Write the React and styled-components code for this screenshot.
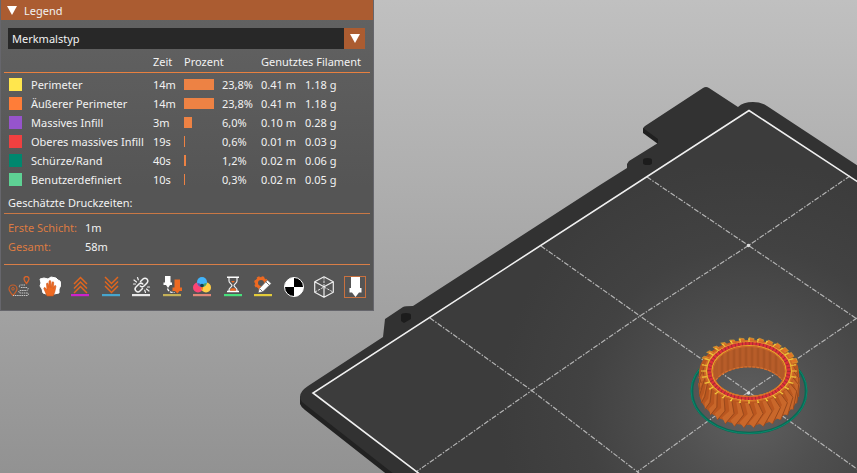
import { useState } from 'react';
import styled, { createGlobalStyle } from 'styled-components';

const features = [
  { name: 'Perimeter', color: '#ffe64d', time: '14m', share: 30, percent: '23,8%', length: '0.41 m', weight: '1.18 g' },
  { name: 'Äußerer Perimeter', color: '#ff7d38', time: '14m', share: 30, percent: '23,8%', length: '0.41 m', weight: '1.18 g' },
  { name: 'Massives Infill', color: '#9654cc', time: '3m', share: 8, percent: '6,0%', length: '0.10 m', weight: '0.28 g' },
  { name: 'Oberes massives Infill', color: '#f04040', time: '19s', share: 1, percent: '0,6%', length: '0.01 m', weight: '0.03 g' },
  { name: 'Schürze/Rand', color: '#00876e', time: '40s', share: 2, percent: '1,2%', length: '0.02 m', weight: '0.06 g' },
  { name: 'Benutzerdefiniert', color: '#5ed194', time: '10s', share: 1, percent: '0,3%', length: '0.02 m', weight: '0.05 g' },
];

const Chevrons = ({ down }) => (
  <g fill="none" stroke="#e0661f" strokeWidth="1.5" transform={down ? 'matrix(1 0 0 -1 0 18)' : undefined}>
    <path d="M5 8l6.500-6.500L18 8M5 12.500L11.500 6 18 12.500M5 17l6.500-6.500L18 17" />
  </g>
);

const tools = [
  {
    label: 'Eilgang',
    art: (
      <>
        <path d="M5 19.500c-3-3.500-4-5-4-6.500a4 4 0 0 1 8 0c0 1.500-1 3-4 6.500z" fill="none" stroke="#c9602a" strokeWidth="1.200" />
        <circle cx="5" cy="12.800" r="1.300" fill="none" stroke="#c9602a" />
        <path d="M18.500 7.500c-2-2.500-2.500-3.500-2.500-4.500a2.500 2.500 0 0 1 5 0c0 1-.5 2-2.500 4.500z" fill="none" stroke="#d9642a" strokeWidth="1.300" />
        <path d="M17 9h-4c-3 0-2 2.500 0 2.500h5c3 0 3 3 0 3h-5c-3 0-3 2.500 0 2.500h6c2 0 2 2.500 0 2.500H5" fill="none" stroke="#c8c8c8" strokeWidth="1" strokeDasharray="1.500 .7" />
      </>
    ),
  },
  {
    label: 'Wischen',
    art: (
      <>
        <path d="M1 3l4-1 4 1 3-2 5 1 2 2 2 1 1 4-2 4 0 4-5 1-4-1-4 1-3-1-1-4-2-3 1-3z" fill="#fff" stroke="#fff" strokeLinejoin="round" />
        <path d="M8 20l-3-7c-.6-1.200.6-2 1.500-1L8 14 7.500 8c0-1.200 1.500-1.300 1.700 0L9.800 11.500 10 5.500c0-1.300 1.800-1.300 1.800 0l.2 6 1-5c.3-1.200 1.900-.9 1.700.4L14.300 12.500l1-2.500c.5-1 1.800-.6 1.600.5l-1 5c-.5 2.500-1.500 2.500-1.600 4.500z" fill="#ee6a22" stroke="#cf5519" strokeWidth=".6" />
      </>
    ),
  },
  { label: 'Einziehen', bar: '#cc22cc', art: <Chevrons /> },
  { label: 'Wiedereinzug', bar: '#46a5cd', art: <Chevrons down /> },
  {
    label: 'Nähte',
    bar: '#e8e8e8',
    art: (
      <g fill="none" stroke="#f2f2f2" strokeWidth="1.500" strokeLinecap="round">
        <path d="M10.500 5.500l2.500-2.500a2.800 2.800 0 0 1 4 4l-3 3c-1.200 1.200-2.700 1-3.800 0" />
        <path d="M12.500 12.500L10 15a2.800 2.800 0 0 1-4-4l3-3c1.200-1.200 2.700-1 3.800 0" />
        <path d="M4 4l2.500 2M7.500 1.500l.8 2.300M3.500 8h2M19 15l-2.500-2M15.500 16.500l-.8-2.300M19.500 11h-2" strokeWidth="1.200" />
      </g>
    ),
  },
  {
    label: 'Werkzeugwechsel',
    bar: '#c4b158',
    art: (
      <>
        <path d="M4 0h5.500v6.500H11V9H9l-2 3-2-3H2.500V6.500H4z" fill="#fff" />
        <path d="M13.500 3.500H19v8h2V15h-2.500L16.500 17.500 14 15h-2.500v-3.500h2z" fill="#ee6a22" />
        <path d="M6.500 12.500c1 3 3 4 7 4" fill="none" stroke="#fff" strokeWidth="1.200" strokeDasharray="3 1" />
      </>
    ),
  },
  {
    label: 'Farbwechsel',
    bar: '#df8878',
    art: (
      <>
        <circle cx="7" cy="11.500" r="5" fill="#fc4474" />
        <circle cx="15" cy="11.500" r="5" fill="#ffcf47" />
        <circle cx="11" cy="6" r="5" fill="#42b4fa" />
        <path d="M11 8.500a5 5 0 0 1 0 6 5 5 0 0 1 0-6z" fill="#f47a26" />
        <path d="M6.200 7a5 5 0 0 1 4.800 4 5 5 0 0 1-4.800-4z" fill="#6755a4" />
        <path d="M15.800 7a5 5 0 0 1-4.800 4 5 5 0 0 1 4.800-4z" fill="#42a96b" />
        <circle cx="11" cy="9.500" r="1.800" fill="#173d50" />
      </>
    ),
  },
  {
    label: 'Druckpause',
    bar: '#48df7c',
    art: (
      <>
        <path d="M7 2v3c0 2 3 3 3 4.500S7 12 7 14v1h8v-1c0-2-3-3-3-4.500S15 7 15 5V2" fill="none" stroke="#eee" strokeWidth="1.200" />
        <path d="M5 1.200h12M5 15.500h12" stroke="#fff" strokeWidth="1.500" />
        <path d="M9 5h4L11 7zM8 14.800c0-2 1-2.500 3-2.500s3 .5 3 2.500z" fill="#ee6a22" />
      </>
    ),
  },
  {
    label: 'Benutzerdefinierter G-Code',
    bar: '#e3cc3a',
    art: (
      <>
        <circle cx="9" cy="7" r="4.500" fill="none" stroke="#ee6a22" strokeWidth="3" />
        <circle cx="9" cy="7" r="6" fill="none" stroke="#ee6a22" strokeWidth="1.800" strokeDasharray="2.600 2.100" />
        <path d="M6 17l1.300-4.500L15.500 4l3.800 3.500-8.500 8.300z" fill="#fff" stroke="#575757" strokeWidth=".7" />
        <path d="M13.500 5.500l4 4M8 13l2.500 2.500" stroke="#575757" strokeWidth=".8" />
      </>
    ),
  },
  {
    label: 'Schwerpunkt',
    art: (
      <>
        <circle cx="11" cy="11" r="9.500" fill="#000" stroke="#fff" />
        <path d="M11 11V1.500A9.500 9.500 0 0 0 1.500 11zM11 11v9.500a9.500 9.500 0 0 0 9.500-9.500z" fill="#fff" />
      </>
    ),
  },
  {
    label: 'Hülle',
    art: (
      <g fill="none" stroke="#eee" strokeWidth="1.200" strokeLinejoin="round">
        <path d="M11 .8l9.300 5v10.500L11 21.300l-9.300-5V5.800zM1.700 5.800l9.300 5 9.300-5M11 10.800v10.500" />
        <path d="M11 1v9M2 16l9-5 9 5" strokeWidth=".9" strokeDasharray="2.500 1" />
      </g>
    ),
  },
  {
    label: 'Werkzeugmarker',
    active: true,
    art: <path d="M7 0h9v12h1.500v4.500H15L11.500 21 8 16.500H5.500V12H7z" fill="#fff" />,
  },
];

const at = (cx, cy, rx, ry, a) => `${(cx + rx * Math.cos(a)).toFixed(1)} ${(cy + ry * Math.sin(a)).toFixed(1)}`;
const TEETH = 32;
const toothAngles = Array.from({ length: TEETH }, (_, i) => (i / TEETH) * Math.PI * 2 + Math.PI / 2);

function Tyre() {
  return (
    <g>
      <ellipse cx="749" cy="391" rx="57" ry="42" fill="none" stroke="#086a55" strokeWidth="2.600" />
      <ellipse cx="749" cy="391" rx="58" ry="42.500" fill="none" stroke="#0a8a6c" strokeWidth="1" />
      <path
        fillRule="evenodd"
        fill="#b9561f"
        d="M699 373a50 33 0 0 1 100 0l0 18a50 34 0 0 1-100 0zM713 371a36 26 0 0 0 72 0a36 26 0 0 0-72 0z"
      />
      {/* inner wall, open towards the floor */}
      <path fill="#b35a28" d="M713 371a36 26 0 0 1 72 0q0 5-3 9.500a36 22 0 0 0-66 0q-3-4.500-3-9.500z" />
      {Array.from({ length: 21 }, (_, i) => {
        const x = 719 + i * 3;
        const dy = Math.sqrt(1 - ((x - 749) / 36) ** 2);
        return (
          <path key={x} d={`M${x} ${371 - 25 * dy}V${386 - 19 * dy}`} stroke={i % 2 ? '#a04e20' : '#bf622c'} strokeWidth=".8" />
        );
      })}
      <path d="M716 380a36 22 0 0 1 66 0" fill="none" stroke="#d4702e" strokeWidth="1.300" strokeDasharray="3 1" />
      {toothAngles.map((a) => {
        const front = Math.sin(a) > -0.25;
        return front ? (
          <g key={a}>
            <path
              d={`M${at(749, 372, 45, 31, a)}L${at(749, 381, 51, 34, a - 0.09)}L${at(749, 393, 50, 35, a + 0.1)}L${at(749, 391, 48, 32, a + 0.2)}L${at(749, 381, 48, 33, a + 0.03)}L${at(749, 372, 45, 31, a + 0.09)}z`}
              fill="#c9672a"
            />
            <path
              d={`M${at(749, 372, 45, 31, a)}L${at(749, 381, 50, 34, a - 0.09)}L${at(749, 393, 50, 35, a + 0.1)}`}
              fill="none"
              stroke="#99491c"
              strokeWidth="1"
            />
          </g>
        ) : (
          <path
            key={a}
            d={`M${at(749, 371, 45, 30, a)}L${at(749, 371, 51, 33.5, a)}L${at(749, 372, 51, 33.5, a + 0.1)}L${at(749, 372, 45, 30, a + 0.1)}z`}
            fill="#df7426"
            stroke="#d9a42f"
            strokeWidth=".6"
          />
        );
      })}
      <ellipse cx="749" cy="371" rx="43.500" ry="29.500" fill="none" stroke="#d06a28" strokeWidth="3" />
      <ellipse cx="749" cy="371" rx="42.500" ry="29" fill="none" stroke="#e8b532" strokeWidth="1.200" />
      {toothAngles.map((a) => (
        <path
          key={a}
          d={`M${at(749, 371, 43, 29, a)}L${at(749, 371, 47, 32, a)}m-1 0l2 0`}
          stroke="#edc43b"
          strokeWidth="1.200"
        />
      ))}
      <ellipse cx="749" cy="371" rx="39.500" ry="27" fill="none" stroke="#dc3238" strokeWidth="4" />
      <ellipse cx="749" cy="371" rx="39.500" ry="27" fill="none" stroke="#a52a35" strokeWidth="4" strokeDasharray="1 2.500" />
      <ellipse cx="749" cy="371" rx="37" ry="25.500" fill="none" stroke="#e3a72c" strokeWidth="1.200" />
      <ellipse cx="749" cy="371.500" rx="36" ry="25" fill="none" stroke="#cf6828" strokeWidth="1" />
    </g>
  );
}

function Scene() {
  return (
    <SceneSvg viewBox="0 0 857 473" preserveAspectRatio="xMinYMin slice" aria-hidden="true">
      <defs>
        <radialGradient id="glow" gradientUnits="userSpaceOnUse" cx="748" cy="410" r="250">
          <stop offset="0" stopColor="#606060" />
          <stop offset=".3" stopColor="#505050" />
          <stop offset=".65" stopColor="#424242" />
          <stop offset="1" stopColor="#3c3c3c" />
        </radialGradient>
      </defs>
      <path d="M300 397v7q1 3 5 6l84 66h20L306 392z" fill="#222" />
      <path
        d="M308 386L383 337L385 319L403 307Q405 306 413 306L600 185L627 168V164L629 161L658 143L656 139L645 132Q641 129 645 126L703 88Q706 86 709 88L738 107Q743 102 753 102Q761 102 767 106L861 168V478H399L302 402Q296 394 308 386z"
        fill="#323232"
      />
      <path d="M643 128l15 11v5l-15-11z" fill="#202020" />
      <path d="M749 110L313 393l108 80h436V181z" fill="url(#glow)" />
      <g fill="none" stroke="#b4b4b4" strokeWidth="1.200" strokeDasharray="5 1.500 1.500 1.500">
        <path d="M647 177l101.500 68.500L857 319M541 246l99 70 108.500 76L857 469M430 318l101 72 108 83" />
        <path d="M850 176l-101.500 69.500L640 316 531 391l-115 81M857 318l-108.500 74L637 472" />
      </g>
      <path d="M421 475L313 393l436-282.500L861 184" fill="none" stroke="#f0f0f0" strokeWidth="1.600" />
      <g fill="#1c1c1c">
        <path d="M643 160a4.500 2 0 0 1 9 0v3a4.500 2 0 0 1-9 0z" />
        <path d="M401 315a5 2 0 0 1 10 0v4l-7 4-3-2z" />
      </g>
      <circle cx="748.500" cy="245.500" r="1.700" fill="#ddd" />
      <circle cx="748.500" cy="393" r="1.700" fill="#ddd" />
      <Tyre />
    </SceneSvg>
  );
}

function App() {
  const [open, setOpen] = useState(true);

  return (
    <Viewport>
      <GlobalStyle />
      <Scene />
      <Panel>
        <TitleBar type="button" aria-expanded={open} onClick={() => setOpen(!open)}>
          <Triangle />
          Legend
        </TitleBar>
        {open && (
          <>
            <SelectBox>
              <Select aria-label="Ansicht" defaultValue="feature">
                <option value="feature">Merkmalstyp</option>
              </Select>
              <SelectArrow>
                <Triangle />
              </SelectArrow>
            </SelectBox>
            <Table>
              <thead>
                <tr>
                  <th colSpan={2} />
                  <th>Zeit</th>
                  <th colSpan={2}>Prozent</th>
                  <th colSpan={2}>Genutztes Filament</th>
                </tr>
              </thead>
              <tbody>
                {features.map((f) => (
                  <tr key={f.name}>
                    <SwatchCell>
                      <Swatch $color={f.color} />
                    </SwatchCell>
                    <NameCell>{f.name}</NameCell>
                    <Cell $width={31}>{f.time}</Cell>
                    <Cell $width={38}>
                      <Bar style={{ width: f.share }} />
                    </Cell>
                    <Cell $width={39}>{f.percent}</Cell>
                    <Cell $width={44}>{f.length}</Cell>
                    <Cell $width={65}>{f.weight}</Cell>
                  </tr>
                ))}
              </tbody>
            </Table>
            <Heading>Geschätzte Druckzeiten:</Heading>
            <Times>
              <dt>Erste Schicht:</dt>
              <dd>1m</dd>
              <dt>Gesamt:</dt>
              <dd>58m</dd>
            </Times>
            <Toolbar>
              {tools.map((t) => (
                <ToolButton key={t.label} type="button" aria-label={t.label} aria-pressed={!!t.active} $active={t.active}>
                  <svg viewBox="0 0 22 22" width="22" height="22">
                    {t.art}
                    {t.bar && <rect x="2" y="18" width="18" height="2.200" fill={t.bar} />}
                  </svg>
                </ToolButton>
              ))}
            </Toolbar>
          </>
        )}
      </Panel>
    </Viewport>
  );
}

const GlobalStyle = createGlobalStyle`
  body {
    margin: 0;
    font: 11px/19px "Noto Sans", sans-serif;
    color: #f2f2f2;
  }
`;

const Viewport = styled.main`
  position: relative;
  min-height: 100vh;
  overflow: hidden;
  background: linear-gradient(#c0c0c0, #929292);
`;

const SceneSvg = styled.svg`
  position: absolute;
  inset: 0;
  width: 100%;
  height: 100%;
`;

const Panel = styled.section`
  position: relative;
  box-sizing: border-box;
  width: fit-content;
  border: 1px solid #66666c;
  border-top: 0;
  background: linear-gradient(#636363, #555 60%);
`;

const TitleBar = styled.button`
  display: flex;
  align-items: center;
  gap: 7px;
  width: 100%;
  height: 20px;
  padding: 0 6px;
  border: 0;
  background: #ab5c31;
  color: inherit;
  font: inherit;
`;

const Triangle = styled.span`
  border: 5px solid transparent;
  border-top: 9px solid #fff;
  border-bottom: 0;
`;

const SelectBox = styled.div`
  position: relative;
  margin: 8px 8px 3px 7px;
`;

const Select = styled.select`
  display: block;
  appearance: none;
  width: 100%;
  height: 21px;
  padding: 0 24px 0 4px;
  border: 0;
  border-radius: 0;
  background: #282828;
  color: inherit;
  font: inherit;
`;

const SelectArrow = styled.span`
  position: absolute;
  inset: 0 0 0 auto;
  display: grid;
  place-items: center;
  width: 21px;
  background: #ab5c31;
  pointer-events: none;
`;

const Table = styled.table`
  margin: 0 3px;
  border-collapse: collapse;
  white-space: nowrap;

  th {
    height: 19px;
    padding: 0 0 1px;
    font-weight: 400;
    text-align: left;
  }

  thead {
    border-bottom: 1px solid #e8803f;
  }

  tbody tr:first-child td {
    padding-top: 2px;
  }
`;

const Cell = styled.td`
  min-width: ${(p) => p.$width}px;
  height: 19px;
  padding: 0;
`;

const SwatchCell = styled(Cell)`
  min-width: 22px;
  padding-left: 5px;
`;

const NameCell = styled(Cell)`
  min-width: 122px;
`;

const Swatch = styled.span`
  display: block;
  width: 13px;
  height: 13px;
  background: ${(p) => p.$color};
`;

const Bar = styled.div`
  height: 11px;
  background: #ed8244;
`;

const Heading = styled.div`
  margin: 4px 3px 0;
  padding: 0 4px 1px;
  border-bottom: 1px solid #c97845;
`;

const Times = styled.dl`
  display: grid;
  grid-template-columns: 77px 1fr;
  margin: 0 3px;
  padding: 4px 4px 8px;
  border-bottom: 1px solid #d97e47;

  dt {
    color: #dd7b42;
  }

  dd {
    margin: 0;
  }
`;

const Toolbar = styled.div`
  display: flex;
  justify-content: space-between;
  padding: 11px 7px 12px;
`;

const ToolButton = styled.button`
  width: 22px;
  height: 22px;
  padding: 0;
  border: 0;
  background: none;
  outline: ${(p) => (p.$active ? '1px solid #c9713f' : 'none')};
  outline-offset: -1px;

  svg {
    display: block;
  }
`;

export default App;
